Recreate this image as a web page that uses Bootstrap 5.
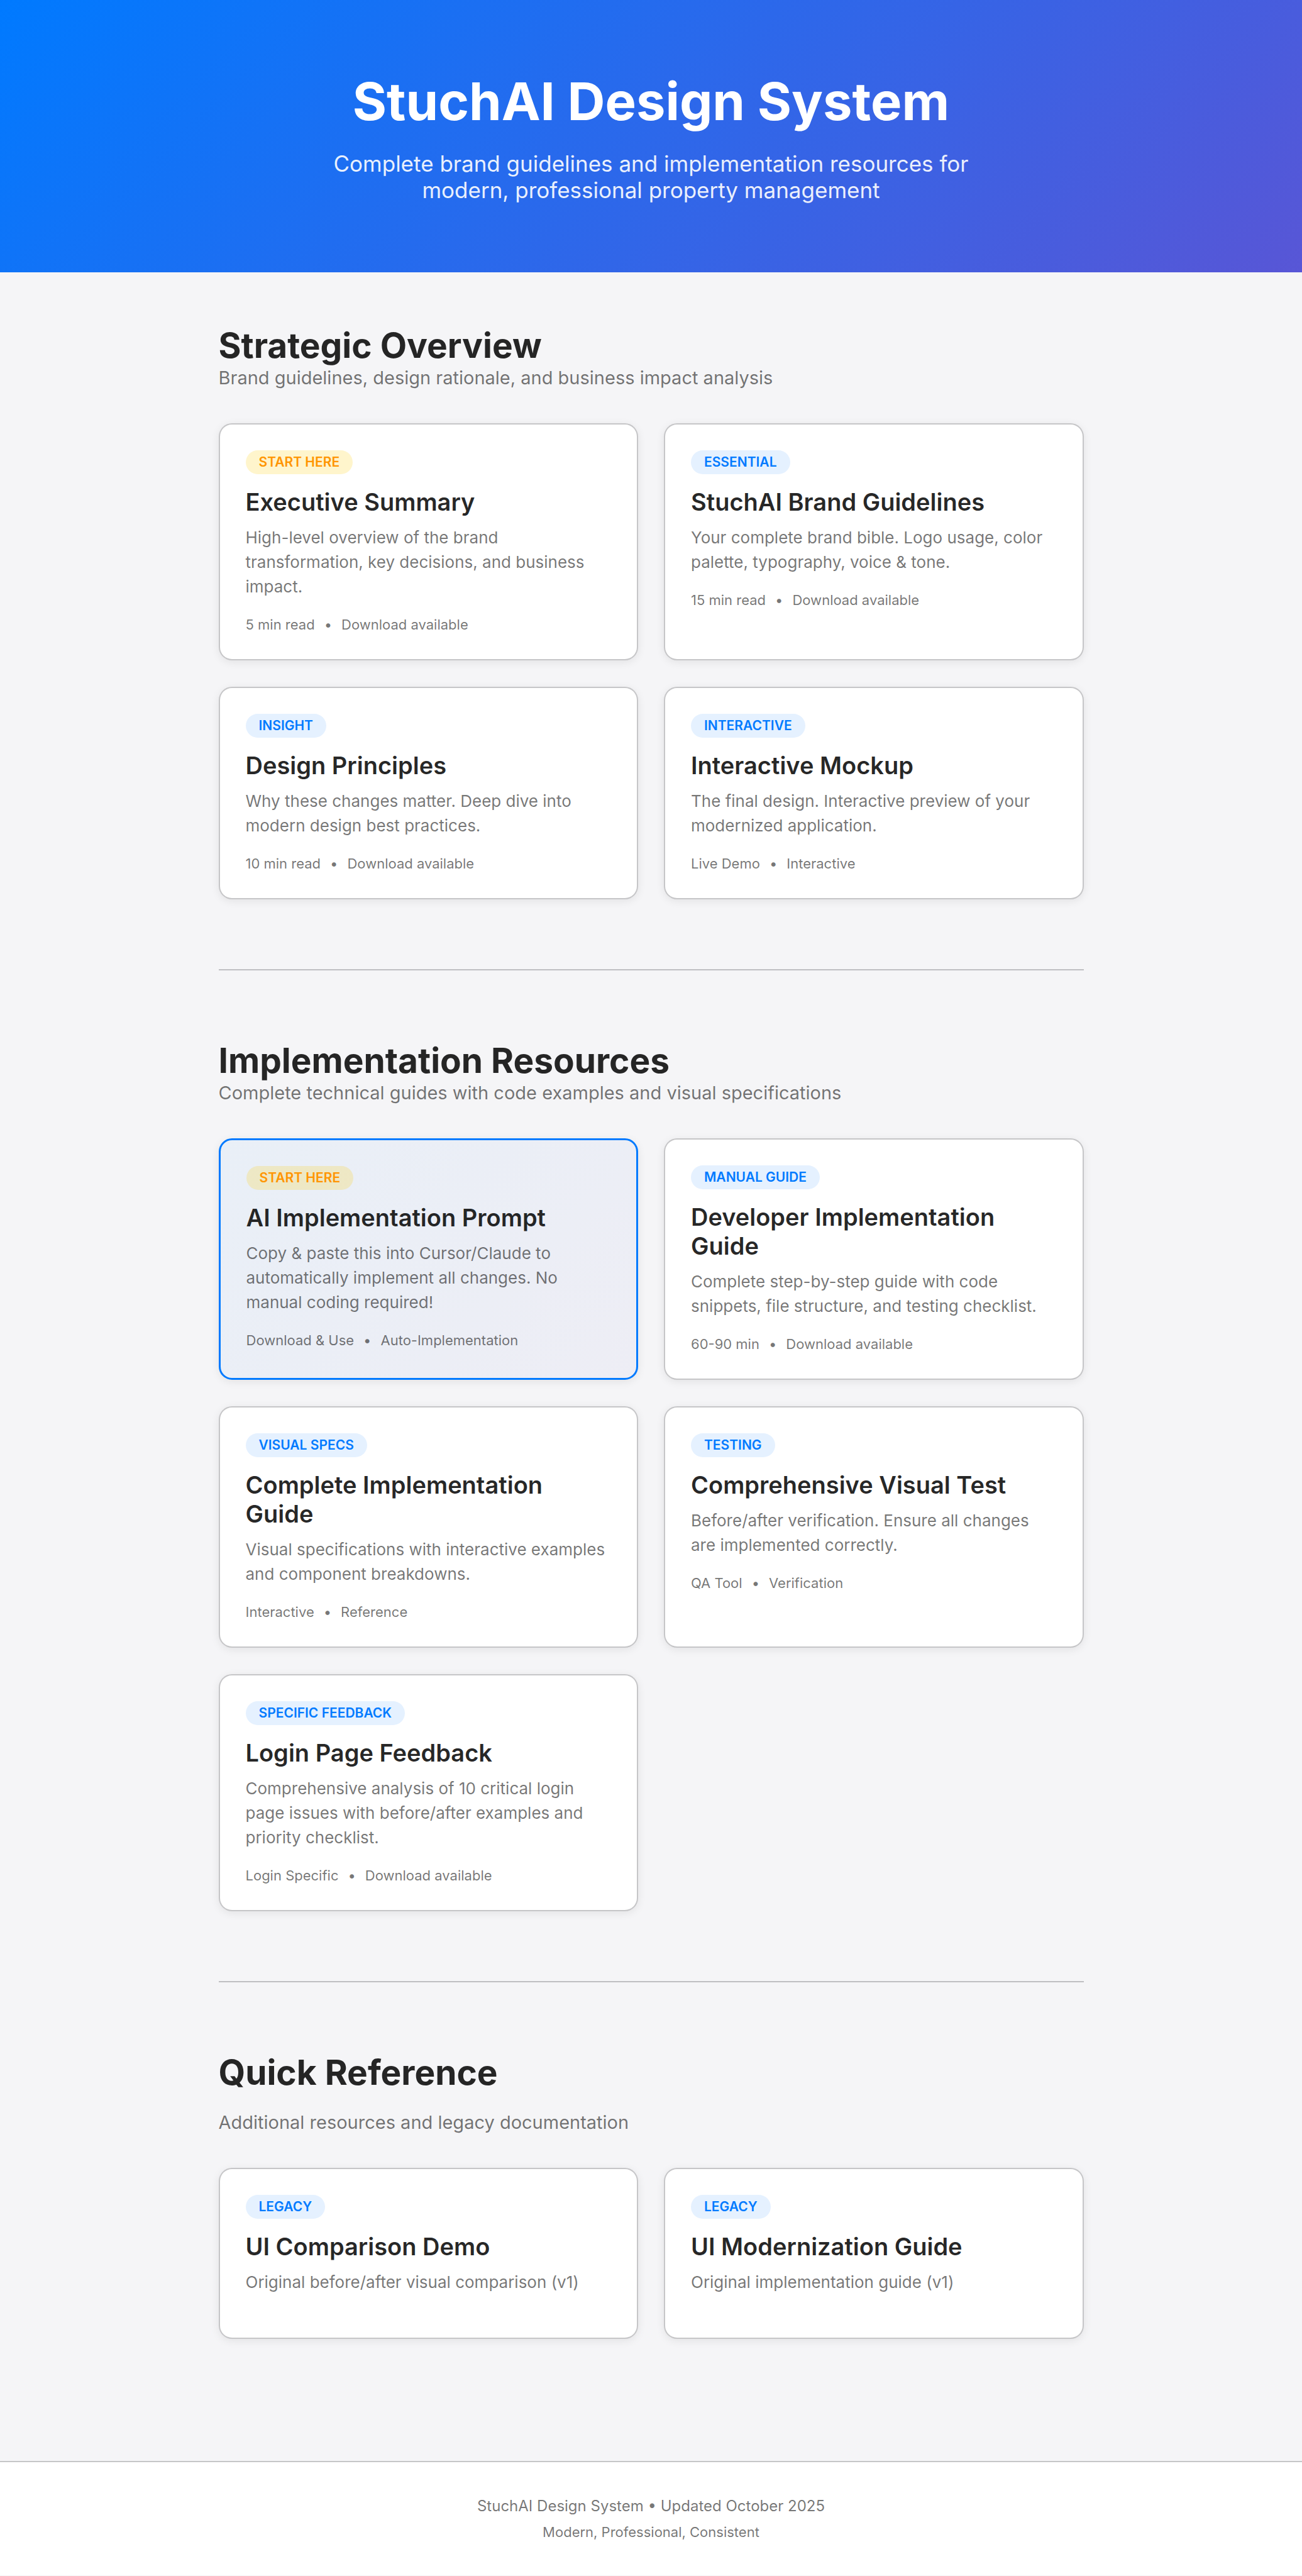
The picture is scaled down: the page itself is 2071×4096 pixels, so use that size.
<!DOCTYPE html>
<html lang="en">
<head>
<meta charset="utf-8">
<meta name="viewport" content="width=device-width, initial-scale=1">
<title>StuchAI Design System</title>
<link href="https://cdn.jsdelivr.net/npm/bootstrap@5.3.0/dist/css/bootstrap.min.css" rel="stylesheet">
<style>
:root { --ink: rgba(0,0,0,.85); --muted: rgba(0,0,0,.55); --line: rgba(60,60,67,.29); --brand: #007aff; }
body { background: #f5f5f7; color: var(--ink); font-family: Inter, "Liberation Sans", sans-serif; font-size: 26px; line-height: 39px; }
.hero { background: linear-gradient(135deg, #007aff 0%, #5856d6 100%); padding: 111px 41px 110px; }
.hero h1 { font-size: 83px; line-height: 100px; font-weight: 700; margin-bottom: 28px; }
.hero p { font-size: 35px; line-height: 42px; max-width: 1036px; opacity: .9; }
.page { max-width: 1458px; padding: 83px 41px; }
.block-title { font-size: 55px; line-height: 67px; font-weight: 700; }
.block-note { font-size: 29px; line-height: 35px; color: var(--muted); margin-bottom: 55px; }
.block-title.spaced { margin-bottom: 28px; }
.tiles { --bs-gutter-x: 41px; --bs-gutter-y: 42px; }
.tile { border: 2px solid var(--line); border-radius: 21px; padding: 41px; box-shadow: 0 3px 14px rgba(0,0,0,.08); color: var(--ink); }
.tile.featured { border: 3px solid var(--brand); background: linear-gradient(135deg, rgba(0,122,255,.05), rgba(88,86,214,.05)); }
.tag { font-size: 21px; line-height: 26px; font-weight: 600; padding: 6px 21px; border-radius: 21px; background: #e5f1ff; color: var(--brand); margin-bottom: 21px; text-transform: uppercase; }
.tag.start { background: rgba(255,204,0,.2); color: #ff9500; }
.tile h3 { font-size: 38px; line-height: 46px; font-weight: 600; margin-bottom: 14px; }
.tile p { color: var(--muted); margin-bottom: 28px; }
.meta { font-size: 22px; line-height: 27px; color: var(--muted); gap: 15px; }
.split { height: 2px; background: var(--line); margin: 111px 0 110px; opacity: 1; border: 0; }
.last { margin-bottom: 111px; }
.foot { border-top: 2px solid var(--line); padding: 55px 41px; color: var(--muted); font-size: 24px; line-height: 29px; }
.foot .sub { font-size: 22px; line-height: 27px; margin-top: 14px; }
</style>
</head>
<body>
<header class="hero text-white text-center">
  <h1>StuchAI Design System</h1>
  <p class="mx-auto mb-0">Complete brand guidelines and implementation resources for modern, professional property management</p>
</header>

<main class="page container-fluid mx-auto">
  <section>
    <h2 class="block-title mb-0">Strategic Overview</h2>
    <p class="block-note">Brand guidelines, design rationale, and business impact analysis</p>
    <div class="row row-cols-2 tiles">
      <div class="col"><a href="#" class="card tile h-100 text-decoration-none align-items-start">
        <span class="tag start">Start Here</span>
        <h3>Executive Summary</h3>
        <p>High-level overview of the brand transformation, key decisions, and business impact.</p>
        <div class="meta d-flex"><span>5 min read</span><span>•</span><span>Download available</span></div>
      </a></div>
      <div class="col"><a href="#" class="card tile h-100 text-decoration-none align-items-start">
        <span class="tag">Essential</span>
        <h3>StuchAI Brand Guidelines</h3>
        <p>Your complete brand bible. Logo usage, color palette, typography, voice &amp; tone.</p>
        <div class="meta d-flex"><span>15 min read</span><span>•</span><span>Download available</span></div>
      </a></div>
      <div class="col"><a href="#" class="card tile h-100 text-decoration-none align-items-start">
        <span class="tag">Insight</span>
        <h3>Design Principles</h3>
        <p>Why these changes matter. Deep dive into modern design best practices.</p>
        <div class="meta d-flex"><span>10 min read</span><span>•</span><span>Download available</span></div>
      </a></div>
      <div class="col"><a href="#" class="card tile h-100 text-decoration-none align-items-start">
        <span class="tag">Interactive</span>
        <h3>Interactive Mockup</h3>
        <p>The final design. Interactive preview of your modernized application.</p>
        <div class="meta d-flex"><span>Live Demo</span><span>•</span><span>Interactive</span></div>
      </a></div>
    </div>
  </section>

  <hr class="split">

  <section>
    <h2 class="block-title mb-0">Implementation Resources</h2>
    <p class="block-note">Complete technical guides with code examples and visual specifications</p>
    <div class="row row-cols-2 tiles">
      <div class="col"><a href="#" class="card tile featured h-100 text-decoration-none align-items-start">
        <span class="tag start">Start Here</span>
        <h3>AI Implementation Prompt</h3>
        <p>Copy &amp; paste this into Cursor/Claude to automatically implement all changes. No manual coding required!</p>
        <div class="meta d-flex"><span>Download &amp; Use</span><span>•</span><span>Auto-Implementation</span></div>
      </a></div>
      <div class="col"><a href="#" class="card tile h-100 text-decoration-none align-items-start">
        <span class="tag">Manual Guide</span>
        <h3>Developer Implementation Guide</h3>
        <p>Complete step-by-step guide with code snippets, file structure, and testing checklist.</p>
        <div class="meta d-flex"><span>60-90 min</span><span>•</span><span>Download available</span></div>
      </a></div>
      <div class="col"><a href="#" class="card tile h-100 text-decoration-none align-items-start">
        <span class="tag">Visual Specs</span>
        <h3>Complete Implementation Guide</h3>
        <p>Visual specifications with interactive examples and component breakdowns.</p>
        <div class="meta d-flex"><span>Interactive</span><span>•</span><span>Reference</span></div>
      </a></div>
      <div class="col"><a href="#" class="card tile h-100 text-decoration-none align-items-start">
        <span class="tag">Testing</span>
        <h3>Comprehensive Visual Test</h3>
        <p>Before/after verification. Ensure all changes are implemented correctly.</p>
        <div class="meta d-flex"><span>QA Tool</span><span>•</span><span>Verification</span></div>
      </a></div>
      <div class="col"><a href="#" class="card tile h-100 text-decoration-none align-items-start">
        <span class="tag">Specific Feedback</span>
        <h3>Login Page Feedback</h3>
        <p>Comprehensive analysis of 10 critical login page issues with before/after examples and priority checklist.</p>
        <div class="meta d-flex"><span>Login Specific</span><span>•</span><span>Download available</span></div>
      </a></div>
    </div>
  </section>

  <hr class="split">

  <section class="last">
    <h2 class="block-title spaced">Quick Reference</h2>
    <p class="block-note">Additional resources and legacy documentation</p>
    <div class="row row-cols-2 tiles">
      <div class="col"><a href="#" class="card tile h-100 text-decoration-none align-items-start">
        <span class="tag">Legacy</span>
        <h3>UI Comparison Demo</h3>
        <p>Original before/after visual comparison (v1)</p>
      </a></div>
      <div class="col"><a href="#" class="card tile h-100 text-decoration-none align-items-start">
        <span class="tag">Legacy</span>
        <h3>UI Modernization Guide</h3>
        <p>Original implementation guide (v1)</p>
      </a></div>
    </div>
  </section>
</main>

<footer class="foot bg-white text-center">
  <div>StuchAI Design System • Updated October 2025</div>
  <div class="sub">Modern, Professional, Consistent</div>
</footer>
<script src="https://cdn.jsdelivr.net/npm/bootstrap@5.3.0/dist/js/bootstrap.bundle.min.js"></script>
</body>
</html>
